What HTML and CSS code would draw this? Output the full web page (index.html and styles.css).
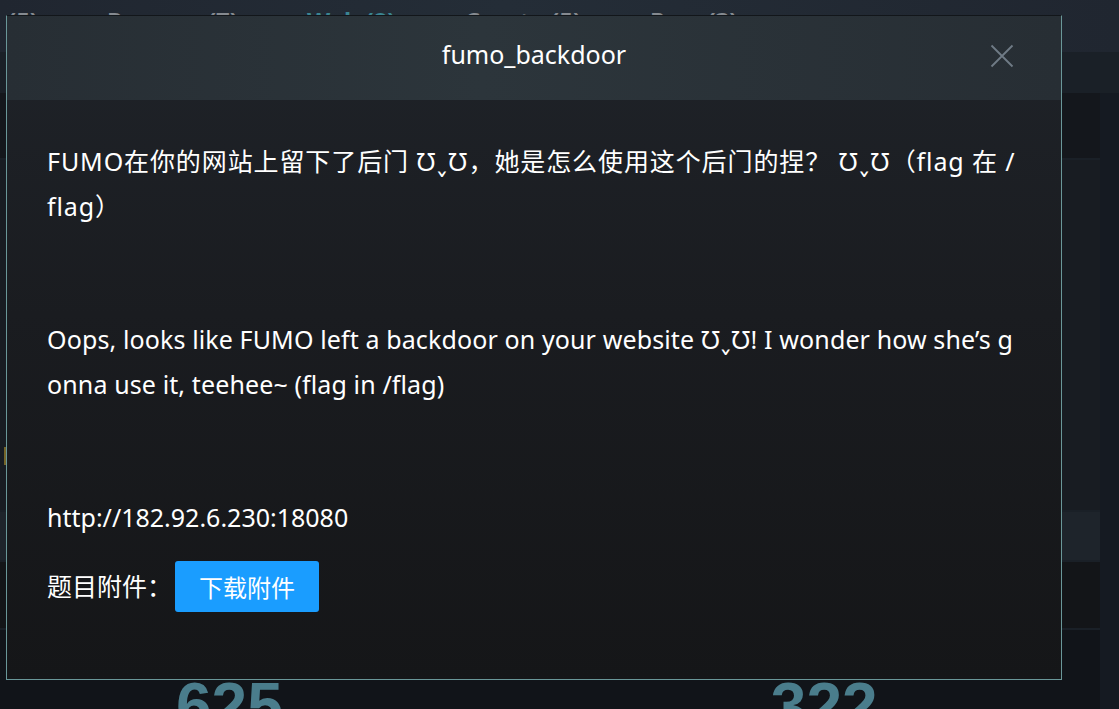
FILE: index.html
```html
<!DOCTYPE html>
<html lang="zh">
<head>
<meta charset="utf-8">
<title>fumo_backdoor</title>
<link rel="stylesheet" href="styles.css">
</head>
<body>
<div class="page">
  <nav class="tabs">
    <span class="tab">(5)</span>
    <span class="tab">Reverse (7)</span>
    <span class="tab active">Web (8)</span>
    <span class="tab">Crypto (5)</span>
    <span class="tab">Pwn (3)</span>
  </nav>
  <div class="board">
    <div class="main">
      <div class="row r1"><span class="mark"></span></div>
      <div class="row r2"><span class="mark gold"></span></div>
      <div class="row r3"></div>
      <div class="row r4"></div>
      <div class="row stats">
        <span class="num">625</span>
        <span class="num">322</span>
      </div>
    </div>
    <div class="side"></div>
  </div>
</div>

<div class="overlay"></div>

<div class="modal">
  <div class="modal-head">
    <h2 class="modal-title">fumo_backdoor</h2>
    <button class="close" aria-label="close">
      <svg width="24" height="24" viewBox="0 0 24 24"><path d="M1.5 1.5 L22.5 22.5 M22.5 1.5 L1.5 22.5" stroke="#6f7b86" stroke-width="1.8" fill="none"/></svg>
    </button>
  </div>
  <div class="modal-body">
    <p class="desc zh">FUMO在你的网站上留下了后门 Ʊ˯Ʊ，她是怎么使用这个后门的捏？ Ʊ˯Ʊ（flag 在 /flag）</p>
    <p class="blank"></p>
    <p class="blank"></p>
    <p class="desc en">Oops, looks like FUMO left a backdoor on your website Ʊ˯Ʊ! I wonder how she’s gonna use it, teehee~ (flag in /flag)</p>
    <p class="blank"></p>
    <p class="blank"></p>
    <p class="desc">http://182.92.6.230:18080</p>
    <div class="attach">
      <span class="attach-label">题目附件：</span>
      <button class="dl">下载附件</button>
    </div>
  </div>
</div>
</body>
</html>
```
FILE: styles.css
```css
* { box-sizing: border-box; }
html, body { margin: 0; padding: 0; }
body {
  width: 1119px;
  height: 709px;
  overflow: hidden;
  background: #1a2029;
  font-family: "Noto Sans", "Noto Sans CJK SC", sans-serif;
  position: relative;
}
.page { height: 709px; display: flex; flex-direction: column; overflow: hidden; }
.tabs {
  flex: none;
  background: linear-gradient(90deg, #222933 0%, #26303a 45%, #222933 100%);
  display: flex;
  padding: 0 0 0 8px;
  font-size: 24px;
  font-weight: bold;
  color: #8d9298;
  line-height: 52px;
  margin-top: -5px;
  height: 57px;
}
.tab { margin-right: 69px; }
.tab.active { color: #3f8d9b; }
.board { flex: 1; min-height: 0; display: flex; padding-top: 41px; background: #1c222a; }
.main { flex: 1; display: flex; flex-direction: column; gap: 2px; min-height: 0; }
.side { width: 19px; background: #171c24; }
.row { position: relative; flex: none; }
.r1 { height: 65px; background: #16191e; }
.r2 { height: 350px; background: #1a1e24; }
.r3 { height: 48px; background: #20262e; }
.r4 { height: 66px; background: #15171a; }
.mark { position: absolute; left: 4px; top: 0; width: 2px; height: 18px; }
.mark.gold { background: #7a6a2c; top: 287px; }
.stats {
  flex: 1;
  min-height: 0;
  overflow: hidden;
  background: #12161b;
  display: flex;
  font-family: "Liberation Sans", sans-serif;
  font-weight: bold;
  font-size: 64px;
  color: #4f8494;
  line-height: 1;
  padding-top: 44px;
}
.num:first-child { margin-left: 176px; }
.num:last-child { margin-left: 488px; }

.overlay {
  position: absolute;
  inset: 0;
  background: rgba(0, 0, 0, 0.05);
}

.modal {
  position: absolute;
  left: 6px;
  top: 15px;
  width: 1056px;
  height: 665px;
  border: 1px solid #6a9799;
  border-top-color: #12161a;
  display: flex;
  flex-direction: column;
  background: linear-gradient(180deg, #1f2329 0%, #1a1c20 45%, #151618 100%);
}
.modal-head {
  height: 84px;
  flex: none;
  background: linear-gradient(90deg, #272e34 0%, #2c353b 45%, #272e34 100%);
  display: flex;
  align-items: center;
  justify-content: center;
  position: relative;
  padding-bottom: 9px;
}
.modal-title {
  margin: 0;
  font-family: "Noto Sans", sans-serif;
  font-weight: normal;
  font-size: 25px;
  color: #ffffff;
}
.close {
  position: absolute;
  right: 47px;
  top: 28px;
  width: 24px;
  height: 24px;
  padding: 0;
  border: 0;
  background: none;
  display: flex;
}
.modal-body {
  flex: 1;
  padding: 39px 40px 0 40px;
  color: #ffffff;
  font-size: 25px;
  line-height: 45px;
}
.desc { margin: 0; word-break: break-all; }
.desc.zh { letter-spacing: 0.9px; }
.desc.en { letter-spacing: 0.12px; }
.blank { margin: 0; height: 44px; }
.attach {
  display: flex;
  align-items: center;
  margin-top: 21px;
}
.attach-label { width: 128px; }
.dl {
  width: 144px;
  height: 51px;
  border: 0;
  border-radius: 3px;
  background: #1a9dff;
  color: #ffffff;
  font-family: "Noto Sans CJK SC", sans-serif;
  font-size: 24px;
  padding: 0;
}
```
